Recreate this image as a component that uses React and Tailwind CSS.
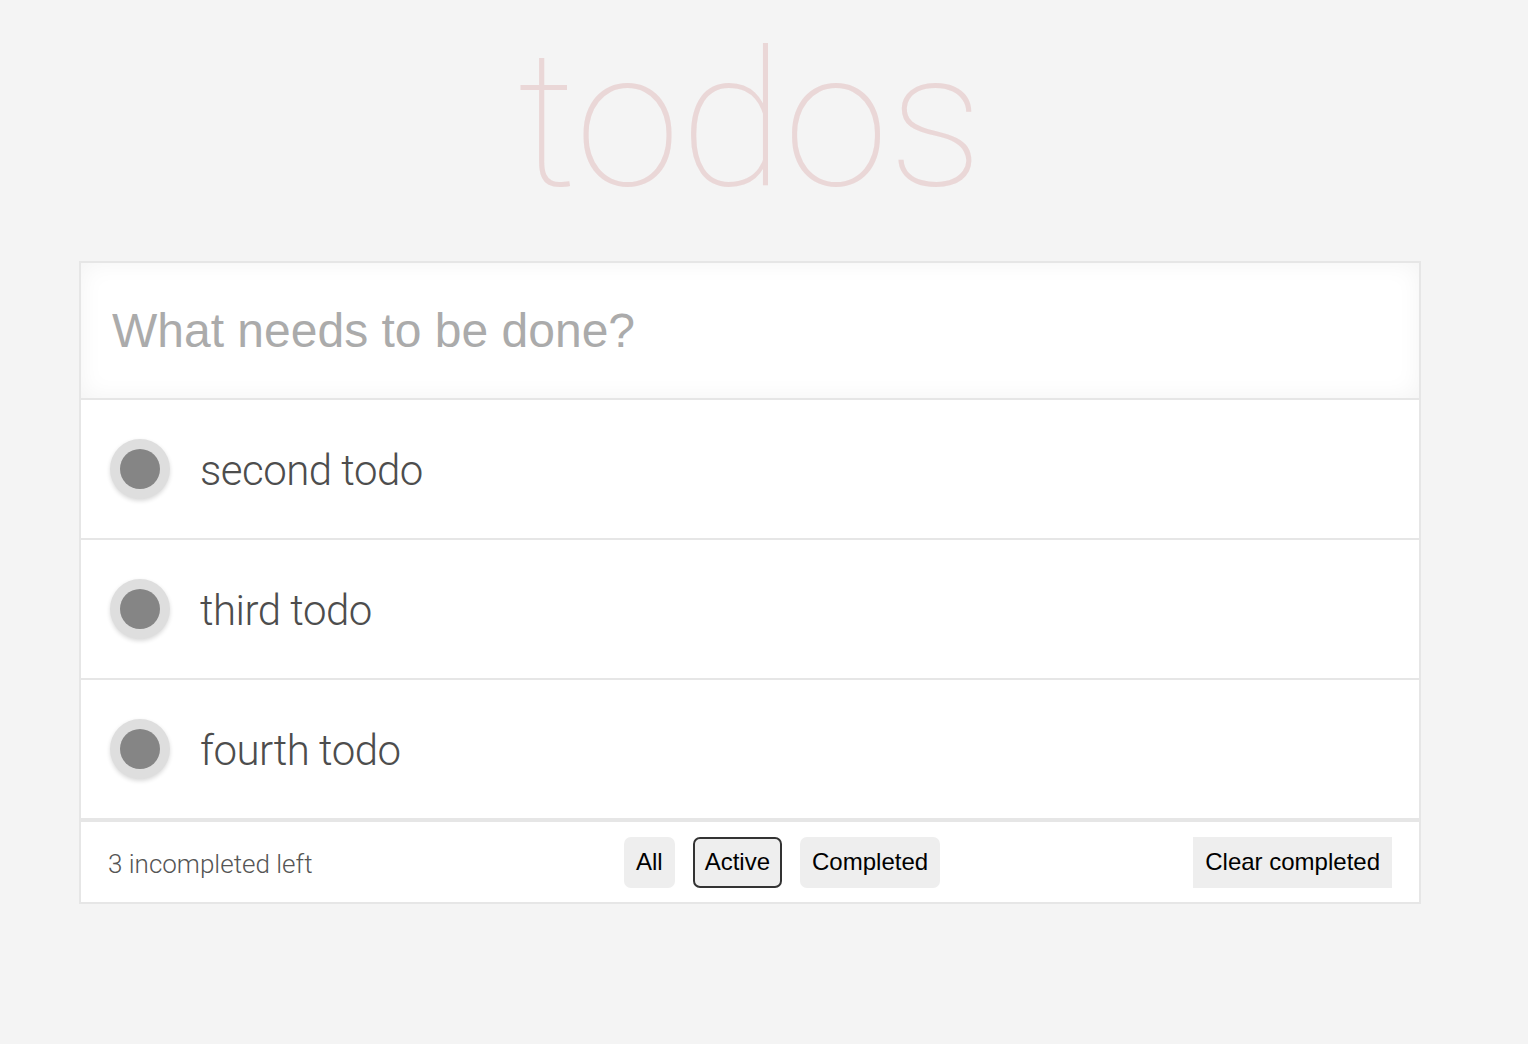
import React from 'react';

const todos = [
  { id: 2, title: 'second todo' },
  { id: 3, title: 'third todo' },
  { id: 4, title: 'fourth todo' }
];

const TodoItem = ({ title }) => (
  <li className="flex items-center h-[140px] border-b-2 border-[#e6e6e6] px-[29px]">
    <span className="flex items-center justify-center w-[60px] h-[60px] rounded-full bg-[#dedede] shadow-[0_2px_4px_rgba(0,0,0,0.15)]">
      <span className="w-[40px] h-[40px] rounded-full bg-[#858585]" />
    </span>
    <span className="ml-[30px] pt-[3px] text-[42px] font-light text-[#4d4d4d] tracking-[-0.5px]" style={{ fontFamily: '"Helvetica Neue", Roboto, "Liberation Sans", sans-serif' }}>
      {title}
    </span>
  </li>
);

export default function App() {
  return (
    <div className="min-h-[1044px] bg-[#f4f4f4]" style={{ fontFamily: '"Liberation Sans", Arial, sans-serif' }}>
      <h1
        className="ml-[79px] w-[1342px] h-[261px] text-center text-[190px] leading-[240px] font-thin text-[#ead7d7]"
        style={{ fontFamily: '"Helvetica Neue", Roboto, sans-serif' }}
      >
        todos
      </h1>

      <section className="ml-[79px] w-[1342px] border-2 border-[#e6e6e6] bg-white">
        <div className="h-[137px] flex items-center px-[31px] border-b-2 border-[#e6e6e6] shadow-[inset_0_0_24px_rgba(0,0,0,0.05)]">
          <input
            className="w-full bg-transparent outline-none text-[48px] text-[#4d4d4d] placeholder:text-[#ababab]"
            placeholder="What needs to be done?"
          />
        </div>

        <ul>
          {todos.map((t) => (
            <TodoItem key={t.id} title={t.title} />
          ))}
        </ul>

        <footer className="flex items-center h-[82px] border-t-2 border-[#e6e6e6] px-[27px]">
          <span
            className="w-[516px] pt-[4px] text-[26px] font-light text-[#555]"
            style={{ fontFamily: '"Helvetica Neue", Roboto, sans-serif' }}
          >
            3 incompleted left
          </span>
          <div className="flex items-center gap-[18px]">
            <button className="h-[51px] px-[10px] rounded-[7px] bg-[#eeeeee] text-[24px] text-black border-2 border-transparent">All</button>
            <button className="h-[51px] px-[10px] rounded-[7px] bg-[#eeeeee] text-[24px] text-black border-2 border-[#333]">Active</button>
            <button className="h-[51px] px-[10px] rounded-[7px] bg-[#eeeeee] text-[24px] text-black border-2 border-transparent">Completed</button>
          </div>
          <button className="ml-auto h-[51px] px-[12px] bg-[#eeeeee] text-[24px] text-black">Clear completed</button>
        </footer>
      </section>
    </div>
  );
}
